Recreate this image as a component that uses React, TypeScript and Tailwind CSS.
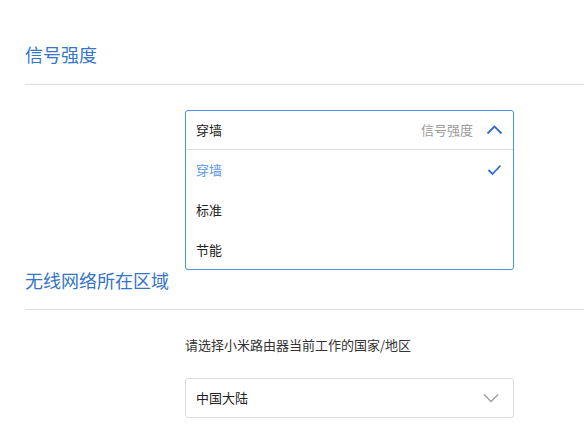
import React from "react";

const font = { fontFamily: '"Noto Sans CJK SC", "Noto Sans", sans-serif' };

export default function App() {
  return (
    <div className="w-[584px] h-[424px] overflow-hidden bg-white" style={font}>
      <div className="pl-[25px]">
        <div className="pt-[42px] pb-[18px] border-b border-[#dcdcdc]">
          <h2 className="text-[18px] leading-[24px] text-[#3574c8]">信号强度</h2>
        </div>
        <div className="ml-[160px] mt-[25px] w-[329px] h-[40px] relative">
          <div className="absolute left-0 top-0 w-[329px] h-[160px] border border-[#4a90e2] rounded-[3px] bg-white z-10 flex flex-col">
            <div className="h-[39px] shrink-0 border-b border-[#dcdcdc] flex items-center pl-[10px] pr-[10px] text-[13px]">
              <span className="text-[#222]">穿墙</span>
              <span className="ml-auto text-[#9a9a9a]">信号强度</span>
              <svg className="ml-[13px]" width="17" height="10" viewBox="0 0 17 10" fill="none">
                <path d="M1.5 8.5 L8.5 1.5 L15.5 8.5" stroke="#2e6fc4" strokeWidth="1.8" />
              </svg>
            </div>
            <div className="h-[40px] flex items-center pl-[10px] pr-[11px] text-[13px] text-[#5b97ea]">
              <span>穿墙</span>
              <svg className="ml-auto" width="15" height="12" viewBox="0 0 15 12" fill="none">
                <path d="M1.5 6 L5.5 10 L13.5 1.5" stroke="#2e6fc4" strokeWidth="1.8" />
              </svg>
            </div>
            <div className="h-[40px] flex items-center pl-[10px] text-[13px] text-[#222]">标准</div>
            <div className="h-[39px] flex items-center pl-[10px] text-[13px] text-[#222]">节能</div>
          </div>
        </div>
        <div className="mt-[118px] pb-[17px] border-b border-[#dcdcdc]">
          <h2 className="text-[18px] leading-[24px] text-[#3574c8]">无线网络所在区域</h2>
        </div>
        <div className="ml-[160px]">
          <p className="mt-[25px] text-[13px] leading-[20px] text-[#333]">请选择小米路由器当前工作的国家/地区</p>
          <div className="mt-[23px] w-[329px] h-[40px] border border-[#dcdcdc] rounded-[3px] flex items-center pl-[10px] pr-[14px] text-[13px] text-[#222]">
            <span>中国大陆</span>
            <svg className="ml-auto" width="16" height="10" viewBox="0 0 16 10" fill="none">
              <path d="M1 1.5 L8 8.5 L15 1.5" stroke="#a0a0a0" strokeWidth="1.5" />
            </svg>
          </div>
        </div>
      </div>
    </div>
  );
}
